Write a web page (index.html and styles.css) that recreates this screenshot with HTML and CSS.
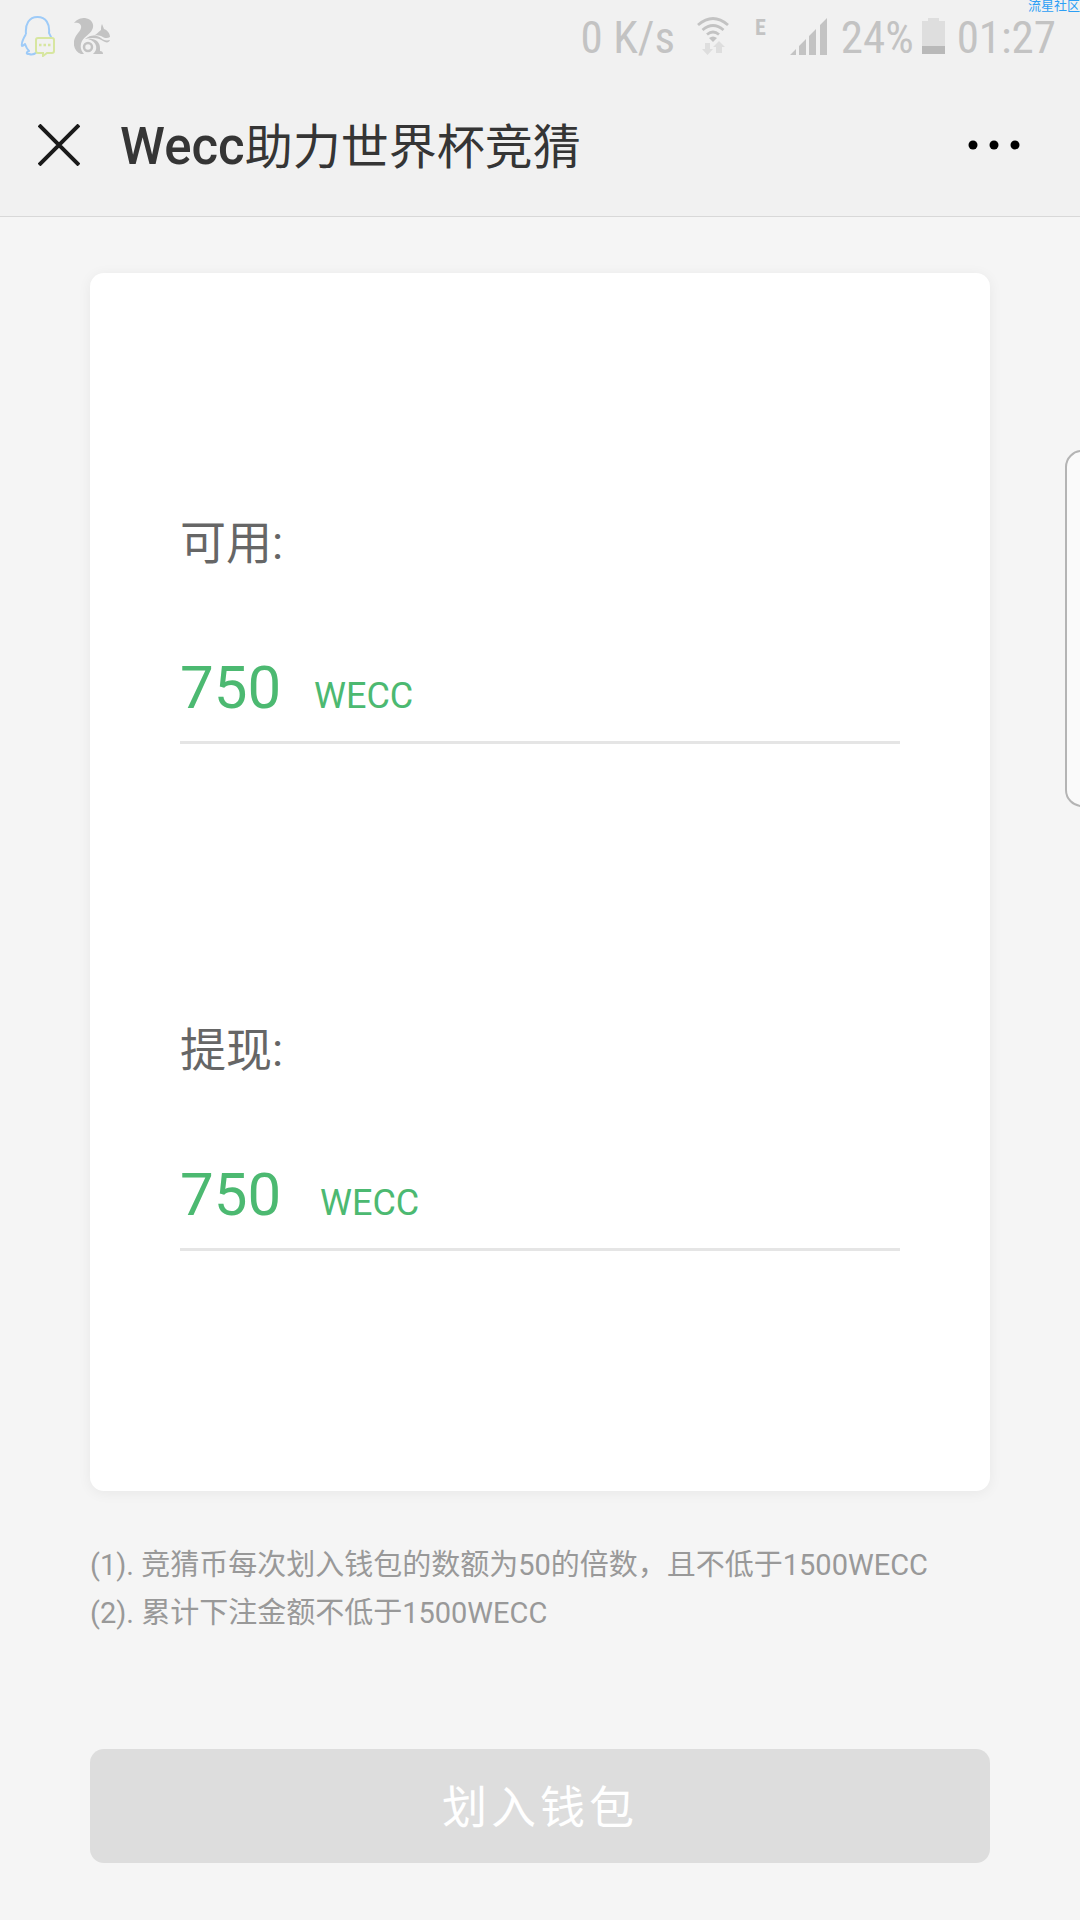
FILE: index.html
```html
<!DOCTYPE html>
<html lang="zh-CN">
<head>
<meta charset="utf-8">
<meta name="viewport" content="width=device-width, initial-scale=1">
<title>Wecc助力世界杯竞猜</title>
<link rel="stylesheet" href="styles.css">
</head>
<body>
<div class="status-bar">
  <div class="status-left">
    <svg class="icon-qq" viewBox="0 0 36 42" aria-hidden="true">
      <path d="M6 19C5 9 9 2 17.500 2s12.500 7 11.500 16c2 3 3 6 3 9M6 19c-3 5-5 9-4 12 1 0 2-1 3-2 1 3 2 5 4 7-3 1-3 3 0 3 3 1 6 0 8-2" fill="none" stroke="#9ecbf8" stroke-width="2" stroke-linejoin="round"/>
      <path d="M18 23h14q2 0 2 2v11q0 2-2 2h-5l-4 3v-3h-5q-2 0-2-2V25q0-2 2-2z" fill="#f1f1f1" stroke="#d7e6a0" stroke-width="2"/>
      <path d="M19 30h2.500M23.500 30h2.500M28 30h2.500" stroke="#d7e6a0" stroke-width="2.500"/>
    </svg>
    <svg class="icon-uc" viewBox="0 0 36 36" aria-hidden="true">
      <path d="M0 5C3 1 7 0 11 0c7 1 10 7 7 12-2 4-7 6-10 11-2 4-2 9 2 13H7C2 34-1 29 0 23c1-6 6-9 7-13C8 6 4 4 0 5z" fill="#c3c3c3"/>
      <path d="M27 12c0-2 0-4 1-6l2 5c3 1 6 4 6 8-3 2-6 1-9-1-3-1-6-1-8 0 3-1 5-4 8-6z" fill="#c3c3c3"/>
      <path d="M11 21c6-5 12-4 16-1 2 2 5 3 9 2-1 3-4 3-7 1-4-3-10-4-18-2z" fill="#c3c3c3"/>
      <path d="M14 21c7-1 12 3 12 9v3c2 0 3 1 3 3H19c5-4 5-12-5-15z" fill="#c3c3c3"/>
      <circle cx="14" cy="29" r="6.500" fill="#f1f1f1"/>
      <circle cx="14" cy="29" r="4" fill="none" stroke="#c3c3c3" stroke-width="2.500"/>
    </svg>
  </div>
  <div class="status-right">
    <span class="status-text speed">0 K/s</span>
    <svg class="icon-wifi" viewBox="0 0 32 38" aria-hidden="true">
      <path d="M1 8Q16-5 31 8M5.500 13q10.500-9 21 0M10 17.500q6-5 12 0" fill="none" stroke="#c3c3c3" stroke-width="2.800"/>
      <path d="M12 21q4-3 8 0l-4 4z" fill="#c3c3c3"/>
      <path d="M8 26h5v6h3l-5.500 6L5 32h3zM19 36h6v-6h3l-6-6-6 6h3z" fill="#dedede"/>
    </svg>
    <span class="network">E</span>
    <svg class="icon-signal" viewBox="0 0 37 37" aria-hidden="true">
      <path d="M0 37l6-6v6zM9 28l7-7v16H9zM19 18l7-7v26h-7zM30 7l7-7v37h-7z" fill="#c3c3c3"/>
    </svg>
    <span class="status-text percent">24%</span>
    <svg class="icon-battery" viewBox="0 0 23 36" aria-hidden="true">
      <path d="M6 0h11v3h6v33H0V3h6z" fill="#dedede"/>
      <path d="M0 28h23v8H0z" fill="#b9b9b9"/>
    </svg>
    <time class="status-text">01:27</time>
  </div>
</div>
<span class="watermark">流星社区</span>

<header class="title-bar">
  <button class="icon-button" type="button" aria-label="关闭">
    <svg class="icon-close" viewBox="0 0 42 42" aria-hidden="true"><path d="M1 1l40 40M41 1L1 41" stroke="#1a1a1a" stroke-width="4"/></svg>
  </button>
  <h1 class="title"><span class="title-latin">Wecc</span>助力世界杯竞猜</h1>
  <button class="icon-button" type="button" aria-label="更多">
    <svg class="icon-more" viewBox="0 0 52 10" aria-hidden="true"><circle cx="5" cy="5" r="4.500"/><circle cx="26" cy="5" r="4.500"/><circle cx="47" cy="5" r="4.500"/></svg>
  </button>
</header>

<main class="page">
  <form class="transfer">
    <div class="card">
      <div class="field">
        <label class="field-label" for="available">可用:</label>
        <div class="field-row"><output class="amount amount-available" id="available">750</output><span class="unit">WECC</span></div>
      </div>
      <div class="field">
        <label class="field-label" for="withdraw">提现:</label>
        <div class="field-row"><input class="amount amount-withdraw" id="withdraw" type="text" inputmode="numeric" value="750"><span class="unit">WECC</span></div>
      </div>
    </div>
    <div class="notes">
      <p class="note">(1). 竞猜币每次划入钱包的数额为50的倍数，且不低于1500WECC</p>
      <p class="note">(2). 累计下注金额不低于1500WECC</p>
    </div>
    <button class="submit" type="submit" disabled>划入钱包</button>
  </form>
</main>
<div class="edge-handle"></div>
</body>
</html>
```
FILE: styles.css
```css
* {
  box-sizing: border-box;
}

body {
  position: relative;
  min-height: 100vh;
  margin: 0;
  overflow-x: hidden;
  background: #f5f5f5;
  font-family: Roboto, "Noto Sans CJK SC", sans-serif;
}

svg {
  display: block;
  flex: none;
}

.status-bar {
  display: flex;
  justify-content: space-between;
  height: 72px;
  padding: 0 24px 0 20px;
  background: #f1f1f1;
  color: #c3c3c3;
  font-family: "Roboto Condensed", "Liberation Sans Narrow", Roboto, sans-serif;
}

.status-left,
.status-right {
  display: flex;
  align-items: center;
}

.status-left {
  gap: 18px;
}

.icon-qq {
  width: 36px;
  height: 42px;
}

.icon-uc {
  width: 36px;
  height: 36px;
}

.status-text {
  padding-top: 4px;
  font-size: 45px;
  line-height: 44px;
}

.speed {
  margin-right: 22px;
}

.icon-wifi {
  width: 32px;
  height: 38px;
  margin-right: 26px;
}

.network {
  margin-right: 24px;
  padding-bottom: 16px;
  font-size: 22px;
  font-weight: 700;
  line-height: 40px;
}

.icon-signal {
  width: 37px;
  height: 37px;
  margin-right: 14px;
}

.percent {
  margin-right: 8px;
}

.icon-battery {
  width: 23px;
  height: 36px;
  margin-right: 12px;
}

.watermark {
  position: absolute;
  top: 0;
  right: 0;
  color: #2d9ff5;
  font-size: 13px;
  line-height: 12px;
}

.title-bar {
  display: flex;
  align-items: center;
  height: 145px;
  padding: 2px 48px 0 26px;
  border-bottom: 1px solid #d8d8d8;
  background: #f1f1f1;
}

.icon-button {
  padding: 12px;
  border: 0;
  background: none;
}

.icon-close {
  width: 42px;
  height: 42px;
}

.icon-more {
  width: 52px;
  height: 10px;
}

.title {
  flex: 1;
  margin: 0 0 0 28px;
  padding-top: 4px;
  color: #353535;
  font-size: 48px;
  font-weight: 400;
  line-height: 72px;
}

.title-latin {
  font-size: 51px;
  font-weight: 500;
}

.page {
  padding: 56px 90px;
}

.transfer {
  display: flex;
  flex-direction: column;
}

.card {
  display: flex;
  flex-direction: column;
  gap: 276px;
  padding: 240px 90px;
  border-radius: 14px;
  background: #fff;
  box-shadow: 0 2px 14px rgba(0, 0, 0, 0.06);
}

.field {
  display: flex;
  flex-direction: column;
  gap: 79px;
  border-bottom: 3px solid #e5e5e5;
}

.field-label {
  color: #666;
  font-size: 46px;
  line-height: 60px;
}

.field-row {
  display: flex;
  align-items: baseline;
  padding-bottom: 17px;
  color: #4cb971;
}

.amount {
  height: 72px;
  padding: 0;
  border: 0;
  background: none;
  color: inherit;
  font-family: inherit;
  font-size: 60px;
  line-height: 72px;
}

.amount-available {
  width: 134px;
}

.amount-withdraw {
  width: 140px;
}

.unit {
  font-size: 36px;
  line-height: 44px;
}

.notes {
  margin: 50px 0 112px;
  color: #999;
  font-size: 29px;
  line-height: 48px;
}

.note {
  margin: 0;
}

.submit {
  height: 114px;
  padding: 0 0 4px;
  border: 0;
  border-radius: 14px;
  background: #ddd;
  color: #fff;
  font-family: inherit;
  font-size: 45px;
  letter-spacing: 4px;
}

.edge-handle {
  position: absolute;
  top: 450px;
  right: -19px;
  width: 34px;
  height: 357px;
  border: 2px solid #b4b4b4;
  border-radius: 19px;
  background: #fafafa;
}
```
